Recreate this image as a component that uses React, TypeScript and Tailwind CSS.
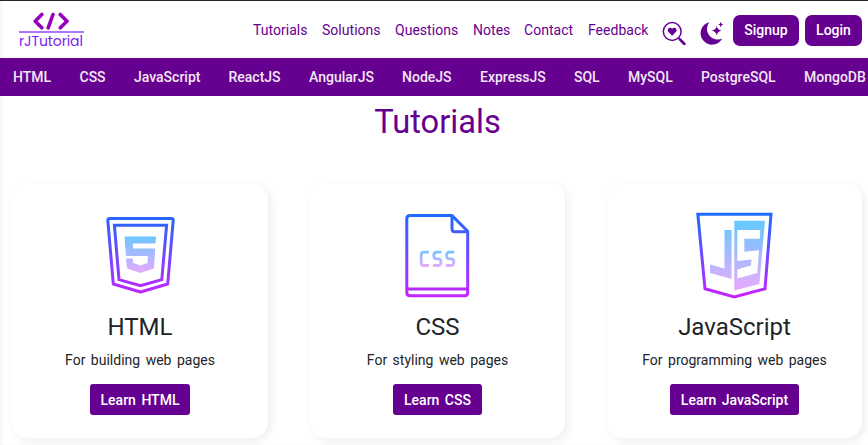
import React from "react";

const navLinks = [
  { label: "Tutorials", cell: "w-[69px]" },
  { label: "Solutions", cell: "w-[73px]" },
  { label: "Questions", cell: "w-[78px]" },
  { label: "Notes", cell: "w-[51px]" },
  { label: "Contact", cell: "w-[64px]" },
  { label: "Feedback", cell: "w-[74px]" },
];

const topics = [
  { label: "HTML", cell: "w-[66.5px]" },
  { label: "CSS", cell: "w-[54.5px]" },
  { label: "JavaScript", cell: "w-[94.5px]" },
  { label: "ReactJS", cell: "w-[80.5px]" },
  { label: "AngularJS", cell: "w-[93px]" },
  { label: "NodeJS", cell: "w-[78px]" },
  { label: "ExpressJS", cell: "w-[94px]" },
  { label: "SQL", cell: "w-[54px]" },
  { label: "MySQL", cell: "w-[73px]" },
  { label: "PostgreSQL", cell: "w-[103px]" },
  { label: "MongoDB", cell: "w-[80px]" },
];

function Gradients({ id }: { id: string }) {
  return (
    <defs>
      <linearGradient id={`${id}-line`} gradientUnits="userSpaceOnUse" x1="0" y1="12" x2="0" y2="98">
        <stop offset="0" stopColor="#1a6dff" />
        <stop offset="1" stopColor="#c822ff" />
      </linearGradient>
      <linearGradient id={`${id}-fill`} gradientUnits="userSpaceOnUse" x1="0" y1="26" x2="0" y2="88">
        <stop offset="0" stopColor="#6dc7ff" />
        <stop offset="1" stopColor="#e6abff" />
      </linearGradient>
      <linearGradient id={`${id}-mark`} gradientUnits="userSpaceOnUse" x1="0" y1="37" x2="0" y2="73">
        <stop offset="0" stopColor="#6dc7ff" />
        <stop offset="1" stopColor="#e6abff" />
      </linearGradient>
      <linearGradient id={`${id}-css`} gradientUnits="userSpaceOnUse" x1="0" y1="50" x2="0" y2="67">
        <stop offset="0" stopColor="#6dc7ff" />
        <stop offset="1" stopColor="#e6abff" />
      </linearGradient>
    </defs>
  );
}

function HtmlIcon() {
  return (
    <svg className="shrink-0" width="100" height="105" viewBox="0 0 100 105" fill="none">
      <Gradients id="html" />
      <g stroke="url(#html-line)" strokeWidth="3" strokeLinejoin="round">
        <path d="M19.5 18.6H81.5Q83.3 18.6 83.2 20.5L77.7 84L50.5 92L23.3 84L17.8 20.5Q17.7 18.6 19.5 18.6Z" />
        <path d="M24.4 25.3H76.6L71.8 79.6L50.5 85.6L29 79.6Z" strokeLinejoin="miter" />
      </g>
      <path d="M34.5 36.5H66L65.5 43.5H43V48.5H65.2L64 68.5L50.5 73L37 68.5L36 58.5H42.7L43.3 63L50.5 65.5L57.5 63L58 56H36Z" fill="url(#html-mark)" />
    </svg>
  );
}

function CssIcon() {
  return (
    <svg className="shrink-0" width="96" height="105" viewBox="0 0 96 105" fill="none">
      <Gradients id="css" />
      <g stroke="url(#css-line)" strokeWidth="3" strokeLinejoin="round">
        <path d="M20 15.6H62L77.7 31.2V92.5Q77.7 95.7 74.5 95.7H20Q16.8 95.7 16.8 92.5V18.8Q16.8 15.6 20 15.6Z" />
        <path d="M62 15.6V29Q62 31.7 64.8 31.7H77.7M16.8 89H77.7" />
      </g>
      <g stroke="url(#css-css)" strokeWidth="2.8">
        <path d="M39 52.2H34Q31.2 52.2 31.2 55V62.7Q31.2 65.5 34 65.5H39" />
        <path d="M51.5 52.2H46.5Q43.8 52.2 43.8 55.5T46.5 58.8H48.5Q51 58.8 51 62.1T48.5 65.5H43" />
        <path d="M64.3 52.2H59.3Q56.6 52.2 56.6 55.5T59.3 58.8H61.3Q63.8 58.8 63.8 62.1T61.3 65.5H55.7" />
      </g>
    </svg>
  );
}

function JsIcon() {
  return (
    <svg className="shrink-0" width="110" height="105" viewBox="0 0 110 105" fill="none">
      <Gradients id="js" />
      <path d="M17.8 14.2H91L85 88.8L54.3 97L25 88.8Z" stroke="url(#js-line)" strokeWidth="3" />
      <path d="M44.5 30H51.5V79L30 73V64.5L44.5 68.5Z" fill="url(#js-fill)" />
      <path d="M54.3 20.7H85L79.3 84L54.3 90.5Z" fill="url(#js-fill)" />
      <path d="M57.3 30H80.3L79.7 38.7H64.3V51.7L79 50.2L77.3 73L57.3 78.5V69.5L71 65.5L71.5 59.5L57.3 61Z" fill="white" />
    </svg>
  );
}

function Logo() {
  return (
    <a className="ml-[19px] mt-[11px] block w-[66px] shrink-0">
      <svg className="ml-[14px]" width="38" height="18" viewBox="0 0 38 18" fill="none" stroke="#9500bd" strokeWidth="3.6" strokeLinecap="round" strokeLinejoin="round">
        <path d="M8.8 2.5L2.2 9.2L8.8 15.8M20 2.5L15.2 15.8M27.3 2.5L34 9.2L27.3 15.8" />
      </svg>
      <div className="mt-px h-[1.5px] w-[65px] bg-[#ac76ff]" />
      <div className="whitespace-nowrap font-['Poppins','Open_Sans',sans-serif] text-[14px] leading-[17px] tracking-[-0.1px] text-[#7b20f2]">rJTutorial</div>
    </a>
  );
}

const cards = [
  { title: "HTML", text: "For building web pages", action: "Learn HTML", icon: <HtmlIcon /> },
  { title: "CSS", text: "For styling web pages", action: "Learn CSS", icon: <CssIcon /> },
  { title: "JavaScript", text: "For programming web pages", action: "Learn JavaScript", icon: <JsIcon /> },
];

export default function App() {
  return (
    <div className="h-[445px] w-[868px] overflow-hidden border-t border-[#252228] bg-white font-['Roboto',sans-serif] text-[#212529] shadow-[inset_2px_0_2px_rgba(0,0,0,0.04)]">
      <header className="flex h-[57px] items-start">
        <Logo />
        <nav className="ml-[168px] mt-[19px] flex text-[14px] leading-5 tracking-[0.03px] text-[#660091]">
          {navLinks.map((l) => (
            <a key={l.label} className={`${l.cell} shrink-0`}>{l.label}</a>
          ))}
        </nav>
        <svg className="mt-5 shrink-0" width="24" height="24" viewBox="0 0 24 24" fill="none" stroke="#660091">
          <circle cx="10.2" cy="10.5" r="8.9" strokeWidth="1.5" />
          <path d="M16.5 17L18.5 19" strokeWidth="2" />
          <path d="M18.5 19L22.4 23" strokeWidth="2.6" strokeLinecap="round" />
          <path d="M10.2 14.8L6.3 10.8C4.3 8 8.2 4.9 10.2 7.8C12.2 4.9 16.1 8 14.1 10.8Z" fill="#660091" stroke="none" />
        </svg>
        <svg className="ml-[14px] mt-5 shrink-0" width="24" height="25" viewBox="0 0 24 25" fill="#660091">
          <path d="M9.3 1.2A11.4 11.4 0 1 0 22.2 17.4A10.6 10.6 0 0 1 9.3 1.2Z" />
          <path d="M16.7 4.8Q17.4 9 21.5 9.7Q17.4 10.4 16.7 14.6Q16 10.4 11.9 9.7Q16 9 16.7 4.8ZM20.7 1Q21.1 3.2 23.3 3.6Q21.1 4 20.7 6.2Q20.3 4 18.1 3.6Q20.3 3.2 20.7 1Z" />
        </svg>
        <button className="ml-[9px] mt-[14px] h-[31px] w-[66px] shrink-0 rounded-[7px] bg-[#660091] text-[14px] font-medium text-white">Signup</button>
        <button className="ml-[6px] mt-[14px] h-[31px] w-[57px] shrink-0 rounded-[7px] bg-[#660091] text-[14px] font-medium text-white">Login</button>
      </header>
      <nav className="flex h-[38px] bg-[#660091] text-[14px] font-medium leading-[38px] text-[#f2e8f5]">
        <div className="flex w-[866px] overflow-hidden pl-[13px]">
          {topics.map((t) => (
            <a key={t.label} className={`${t.cell} shrink-0 whitespace-nowrap`}>{t.label}</a>
          ))}
        </div>
      </nav>
      <main>
        <h1 className="ml-[7px] mt-[6px] text-center text-[32.7px] leading-[40px] text-[#660091]">Tutorials</h1>
        <div className="ml-3 mt-[41px] grid w-[850px] grid-cols-[256px_255px_255px] justify-between">
          {cards.map((c) => (
            <article key={c.title} className="flex h-[255px] flex-col items-center rounded-[16px] bg-white pt-[17px] shadow-[3px_3px_10px_rgba(0,0,0,0.07)]">
              {c.icon}
              <h2 className="mt-[8px] text-[24px] leading-[29px]">{c.title}</h2>
              <p className="mt-[8px] text-[14px] leading-5 [word-spacing:2px]">{c.text}</p>
              <button className="mt-[14px] h-[31px] rounded-[3px] bg-[#660091] px-[11px] pt-px text-[14px] font-medium text-white [word-spacing:2px]">{c.action}</button>
            </article>
          ))}
        </div>
      </main>
    </div>
  );
}
